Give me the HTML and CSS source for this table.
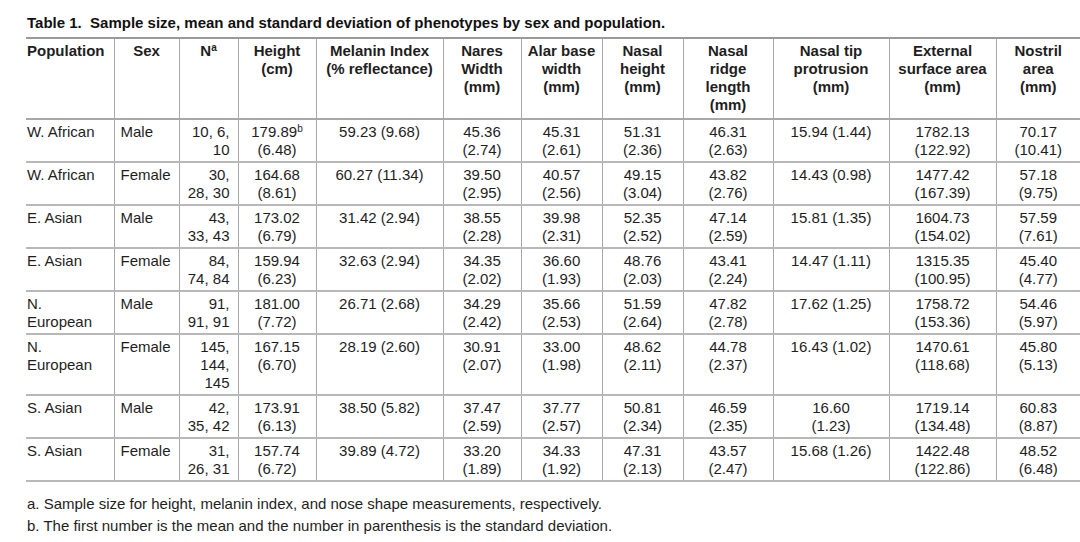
FILE: index.html
```html
<!DOCTYPE html>
<html>
<head>
<meta charset="utf-8">
<link rel="stylesheet" href="styles.css">
</head>
<body>
<div class="page">
  <h1 class="title">Table 1.&nbsp; Sample size, mean and standard deviation of phenotypes by sex and population.</h1>
  <table class="data">
    <colgroup>
      <col class="c-pop"><col class="c-sex"><col class="c-n"><col class="c-h"><col class="c-mel"><col class="c-nar"><col class="c-alar"><col class="c-nh"><col class="c-nr"><col class="c-tip"><col class="c-ext"><col class="c-nos">
    </colgroup>
    <thead>
      <tr>
        <th class="first left">Population</th>
        <th>Sex</th>
        <th>N<sup>a</sup></th>
        <th>Height<br>(cm)</th>
        <th>Melanin Index<br>(% reflectance)</th>
        <th>Nares<br>Width<br>(mm)</th>
        <th>Alar base<br>width<br>(mm)</th>
        <th>Nasal<br>height<br>(mm)</th>
        <th>Nasal<br>ridge<br>length<br>(mm)</th>
        <th>Nasal tip<br>protrusion<br>(mm)</th>
        <th>External<br>surface area<br>(mm)</th>
        <th class="last">Nostril<br>area<br>(mm)</th>
      </tr>
    </thead>
    <tbody>
      <tr>
        <td class="first left">W. African</td><td class="left">Male</td><td class="right">10, 6,<br>10</td><td>179.89<sup>b</sup><br>(6.48)</td><td>59.23 (9.68)</td><td>45.36<br>(2.74)</td><td>45.31<br>(2.61)</td><td>51.31<br>(2.36)</td><td>46.31<br>(2.63)</td><td>15.94 (1.44)</td><td>1782.13<br>(122.92)</td><td class="last">70.17<br>(10.41)</td>
      </tr>
      <tr>
        <td class="first left">W. African</td><td class="left">Female</td><td class="right">30,<br>28, 30</td><td>164.68<br>(8.61)</td><td>60.27 (11.34)</td><td>39.50<br>(2.95)</td><td>40.57<br>(2.56)</td><td>49.15<br>(3.04)</td><td>43.82<br>(2.76)</td><td>14.43 (0.98)</td><td>1477.42<br>(167.39)</td><td class="last">57.18<br>(9.75)</td>
      </tr>
      <tr>
        <td class="first left">E. Asian</td><td class="left">Male</td><td class="right">43,<br>33, 43</td><td>173.02<br>(6.79)</td><td>31.42 (2.94)</td><td>38.55<br>(2.28)</td><td>39.98<br>(2.31)</td><td>52.35<br>(2.52)</td><td>47.14<br>(2.59)</td><td>15.81 (1.35)</td><td>1604.73<br>(154.02)</td><td class="last">57.59<br>(7.61)</td>
      </tr>
      <tr>
        <td class="first left">E. Asian</td><td class="left">Female</td><td class="right">84,<br>74, 84</td><td>159.94<br>(6.23)</td><td>32.63 (2.94)</td><td>34.35<br>(2.02)</td><td>36.60<br>(1.93)</td><td>48.76<br>(2.03)</td><td>43.41<br>(2.24)</td><td>14.47 (1.11)</td><td>1315.35<br>(100.95)</td><td class="last">45.40<br>(4.77)</td>
      </tr>
      <tr>
        <td class="first left">N.<br>European</td><td class="left">Male</td><td class="right">91,<br>91, 91</td><td>181.00<br>(7.72)</td><td>26.71 (2.68)</td><td>34.29<br>(2.42)</td><td>35.66<br>(2.53)</td><td>51.59<br>(2.64)</td><td>47.82<br>(2.78)</td><td>17.62 (1.25)</td><td>1758.72<br>(153.36)</td><td class="last">54.46<br>(5.97)</td>
      </tr>
      <tr>
        <td class="first left">N.<br>European</td><td class="left">Female</td><td class="right">145,<br>144,<br>145</td><td>167.15<br>(6.70)</td><td>28.19 (2.60)</td><td>30.91<br>(2.07)</td><td>33.00<br>(1.98)</td><td>48.62<br>(2.11)</td><td>44.78<br>(2.37)</td><td>16.43 (1.02)</td><td>1470.61<br>(118.68)</td><td class="last">45.80<br>(5.13)</td>
      </tr>
      <tr>
        <td class="first left">S. Asian</td><td class="left">Male</td><td class="right">42,<br>35, 42</td><td>173.91<br>(6.13)</td><td>38.50 (5.82)</td><td>37.47<br>(2.59)</td><td>37.77<br>(2.57)</td><td>50.81<br>(2.34)</td><td>46.59<br>(2.35)</td><td>16.60<br>(1.23)</td><td>1719.14<br>(134.48)</td><td class="last">60.83<br>(8.87)</td>
      </tr>
      <tr>
        <td class="first left">S. Asian</td><td class="left">Female</td><td class="right">31,<br>26, 31</td><td>157.74<br>(6.72)</td><td>39.89 (4.72)</td><td>33.20<br>(1.89)</td><td>34.33<br>(1.92)</td><td>47.31<br>(2.13)</td><td>43.57<br>(2.47)</td><td>15.68 (1.26)</td><td>1422.48<br>(122.86)</td><td class="last">48.52<br>(6.48)</td>
      </tr>
    </tbody>
  </table>
  <div class="notes">
    <p class="note">a. Sample size for height, melanin index, and nose shape measurements, respectively.</p>
    <p class="note">b. The first number is the mean and the number in parenthesis is the standard deviation.</p>
  </div>
</div>
</body>
</html>
```
FILE: styles.css
```css
html, body {
  margin: 0;
  padding: 0;
  background: #ffffff;
}
body {
  font-family: "Liberation Sans", Arial, Helvetica, sans-serif;
  color: #1e1e1e;
  overflow: hidden;
}
.page {
  padding: 14px 0 0 26px;
  width: 1054px;
}
.title {
  margin: 0 0 5px 1px;
  font-size: 15px;
  line-height: 18px;
  font-weight: bold;
  color: #111;
}
.data {
  width: 1054px;
  table-layout: fixed;
  border-collapse: collapse;
  font-size: 15px;
  line-height: 18px;
}
.c-pop { width: 88px; }
.c-sex { width: 65px; }
.c-n { width: 59px; }
.c-h { width: 78px; }
.c-mel { width: 127px; }
.c-nar { width: 78px; }
.c-alar { width: 81px; }
.c-nh { width: 81px; }
.c-nr { width: 90px; }
.c-tip { width: 116px; }
.c-ext { width: 107px; }
.c-nos { width: 84px; }

.data th, .data td {
  vertical-align: top;
  text-align: center;
  border-left: 1px solid #a8a8a8;
  border-right: 1px solid #a8a8a8;
  white-space: nowrap;
}
.data th {
  font-weight: bold;
  padding: 3px 6px 4px 6px;
  border-top: 2px solid #9a9a9a;
  border-bottom: 2px solid #a8a8a8;
  height: 72px;
}
.data td {
  padding: 3px 6px 2px 6px;
  border-bottom: 2px solid #b8b8b8;
}
.data .first {
  border-left: none;
  padding-left: 1px;
}
.data .last {
  border-right: none;
}
.data .left { text-align: left; }
.data .right { text-align: right; padding-right: 8px; }
.data td.first { padding-left: 1px; }
sup {
  font-size: 10px;
  line-height: 0;
  vertical-align: 5px;
}
.notes {
  margin-top: 11px;
  padding-left: 1px;
}
.note {
  margin: 0;
  font-size: 15px;
  line-height: 22px;
  color: #1e1e1e;
}
```
